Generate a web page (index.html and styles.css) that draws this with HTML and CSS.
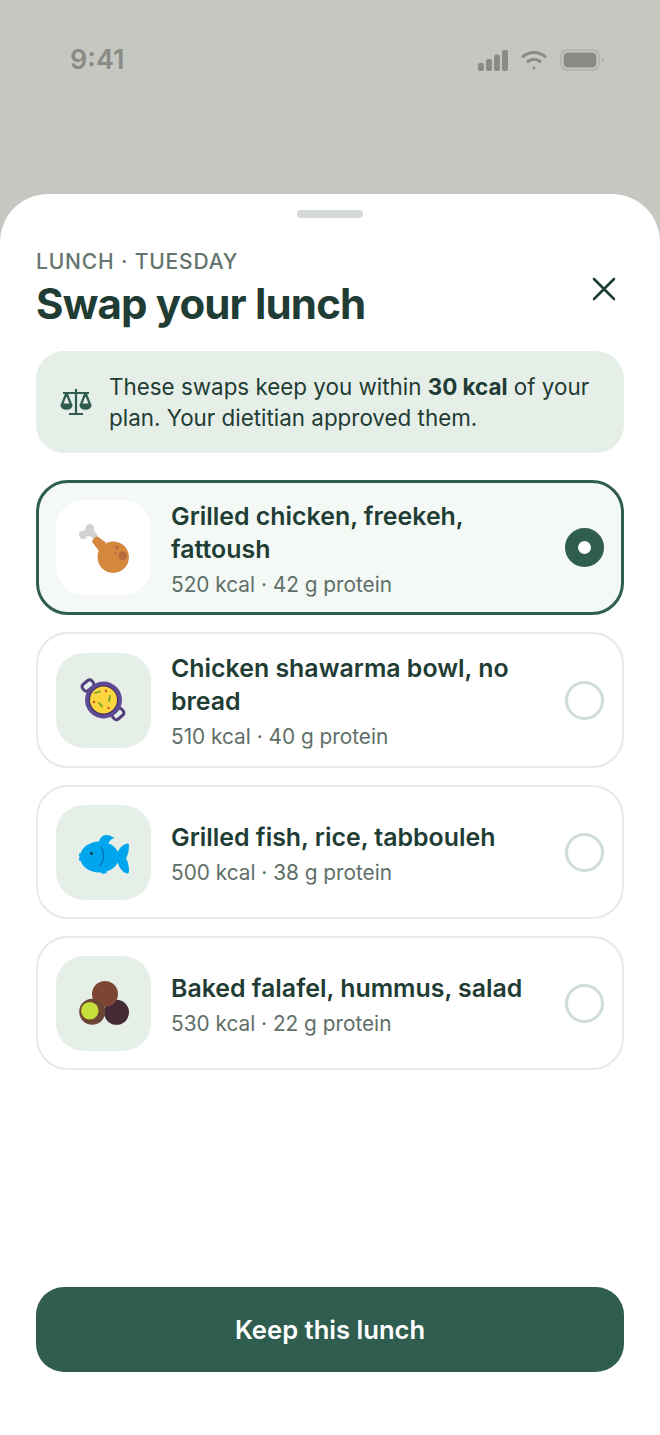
FILE: index.html
```html
<!DOCTYPE html>
<html lang="en">
<head>
  <meta charset="UTF-8">
  <meta name="viewport" content="width=device-width, initial-scale=1.0">
  <title>Swap your lunch</title>
  <link rel="stylesheet" href="styles.css">
</head>
<body>
  <div class="status">
    <span class="time">9:41</span>
    <div class="status-icons">
      <svg width="30" height="21" viewBox="0 0 30 21" fill="#8a8b86">
        <rect x="0" y="13" width="6" height="8" rx="2"/>
        <rect x="8" y="9" width="6" height="12" rx="2"/>
        <rect x="16" y="4.500" width="6" height="16.500" rx="2"/>
        <rect x="24" y="0" width="6" height="21" rx="2"/>
      </svg>
      <svg width="26" height="21" viewBox="0 0 26 21" fill="none" stroke="#8a8b86" stroke-width="3" stroke-linecap="round">
        <path d="M2 6.500C8 1 18 1 24 6.500"/>
        <path d="M7 11.500C10.500 8.500 15.500 8.500 19 11.500"/>
        <circle cx="13" cy="18" r="1.500" fill="#8a8b86" stroke="none"/>
      </svg>
      <svg width="44" height="22" viewBox="0 0 44 22" fill="none">
        <rect x="1" y="1" width="38" height="20" rx="6.500" stroke="#aeafaa" stroke-width="1.500"/>
        <rect x="3.500" y="3.500" width="33" height="15" rx="4.500" fill="#8a8b86"/>
        <path d="M42 9v4c1-.5 1.500-1 1.500-2s-.5-1.500-1.500-2z" fill="#aeafaa"/>
      </svg>
    </div>
  </div>

  <div class="sheet">
    <div class="handle"></div>

    <div class="head">
      <div>
        <div class="eyebrow">LUNCH · TUESDAY</div>
        <h1>Swap your lunch</h1>
      </div>
      <svg class="close" width="24" height="24" viewBox="0 0 24 24" fill="none" stroke="#1f3d34" stroke-width="2.600" stroke-linecap="round">
        <path d="M2 2l20 20M22 2L2 22"/>
      </svg>
    </div>

    <div class="notice">
      <svg class="scale" width="32" height="28" viewBox="0 0 32 28" fill="none" stroke="#2f5d50" stroke-width="2.200" stroke-linejoin="round">
        <path d="M16 1v24M9 26h14M3 5h26"/>
        <path d="M6.500 5L2 16.500h9zM25.500 5L21 16.500h9z"/>
        <path d="M1.500 17c.5 5 9.500 5 10 0zM20.500 17c.5 5 9.500 5 10 0z" fill="#2f5d50"/>
      </svg>
      <p>These swaps keep you within <b>30 kcal</b> of your plan. Your dietitian approved them.</p>
    </div>

    <div class="options">
      <div class="option selected">
        <div class="thumb">
          <svg width="50" height="50" viewBox="0 0 50 50">
            <path d="M5 12l6-6 6 9" stroke="#d1d1d1" stroke-width="5.500" fill="#d1d1d1"/>
            <circle cx="10.800" cy="5.200" r="4.200" fill="#d1d1d1"/>
            <circle cx="4.200" cy="11.800" r="4.200" fill="#d1d1d1"/>
            <path d="M13.500 19.500c-.5-1.500 0-2.500 1-3.500l1.500-1.500c1.500-1 3-1 4 0l7 5L20 28z" fill="#d3883e"/>
            <circle cx="34.200" cy="34.200" r="15.700" fill="#d3883e"/>
            <circle cx="38" cy="24.500" r="2" fill="#b76a3c"/>
            <circle cx="43.500" cy="32.800" r="4.300" fill="#b76a3c"/>
            <circle cx="36.500" cy="30" r="1.200" fill="#b76a3c"/>
          </svg>
        </div>
        <div class="info">
          <div class="name">Grilled chicken, freekeh, fattoush</div>
          <div class="meta">520 kcal · 42 g protein</div>
        </div>
        <div class="radio"></div>
      </div>

      <div class="option">
        <div class="thumb">
          <svg width="50" height="50" viewBox="0 0 50 50">
            <g fill="none" stroke="#533f7d" stroke-width="3">
              <rect x="3" y="6.500" width="12" height="8" rx="3" transform="rotate(-40 9 10.500)"/>
              <rect x="33" y="35" width="12" height="8" rx="3" transform="rotate(-40 39 39)"/>
            </g>
            <circle cx="24.500" cy="25" r="18.500" fill="#5f4b94"/>
            <circle cx="24.500" cy="25" r="14.500" fill="#3f2f5c"/>
            <circle cx="24.500" cy="25" r="13.500" fill="#fcd53f"/>
            <g stroke="#6fa32c" stroke-width="1.800" stroke-linecap="round">
              <path d="M16 18l5-1.500M31 21l-1 5M20 28l3 3.500"/>
            </g>
            <g fill="#e2492b">
              <circle cx="27" cy="16" r="1.200"/><circle cx="15" cy="27" r="1.200"/><circle cx="29.500" cy="33" r="1.200"/>
            </g>
          </svg>
        </div>
        <div class="info">
          <div class="name">Chicken shawarma bowl, no bread</div>
          <div class="meta">510 kcal · 40 g protein</div>
        </div>
        <div class="radio"></div>
      </div>

      <div class="option">
        <div class="thumb">
          <svg width="50" height="50" viewBox="0 0 50 50">
            <g fill="#00a6ed">
              <path d="M20 16c0-4 3-8 7-8 3 0 6 1 8.500 3-4 1-6 4-7 8z"/>
              <path d="M19 42l4 4.500c2 .5 4 0 5-1l-2-4z"/>
              <path d="M38 30c0-6 4-12 10-13.500 2-.5 2 1 2 2 0 5-1 9-3 13 2 3 3 8 3 12 0 2-.5 3.500-2 3-6-1.500-10-9-10-16.500z"/>
              <ellipse cx="20.500" cy="30" rx="19.500" ry="15.500"/>
              <circle cx="1.500" cy="28" r="1.800"/>
              <circle cx="1.500" cy="32" r="1.800"/>
            </g>
            <path d="M22 20c4 6 3 14-1 19" fill="none" stroke="#0074ba" stroke-width="1.400" stroke-linecap="round"/>
            <circle cx="12.500" cy="26.500" r="1.300" fill="#1c1c1c"/>
          </svg>
        </div>
        <div class="info">
          <div class="name">Grilled fish, rice, tabbouleh</div>
          <div class="meta">500 kcal · 38 g protein</div>
        </div>
        <div class="radio"></div>
      </div>

      <div class="option">
        <div class="thumb">
          <svg width="50" height="50" viewBox="0 0 50 50">
            <circle cx="37.500" cy="34.300" r="12.500" fill="#432a35"/>
            <circle cx="26" cy="16" r="13" fill="#7d4533"/>
            <circle cx="13.200" cy="33.700" r="13" fill="#6d4534"/>
            <circle cx="10.800" cy="32.700" r="8.800" fill="#c5e03a"/>
          </svg>
        </div>
        <div class="info">
          <div class="name">Baked falafel, hummus, salad</div>
          <div class="meta">530 kcal · 22 g protein</div>
        </div>
        <div class="radio"></div>
      </div>
    </div>

    <button class="keep">Keep this lunch</button>
  </div>
</body>
</html>
```

FILE: styles.css
```css
* {
  box-sizing: border-box;
}
body {
  margin: 0;
  height: 1435px;
  background: #c6c7c1;
  font-family: Inter, sans-serif;
  color: #1f3d34;
  display: flex;
  flex-direction: column;
  overflow: hidden;
}
.status {
  height: 194px;
  flex: none;
  padding: 43px 56px 0 70px;
  display: flex;
  justify-content: space-between;
  align-items: flex-start;
}
.time {
  font-size: 27px;
  line-height: 34px;
  font-weight: 600;
  color: #8a8b86;
}
.status-icons {
  display: flex;
  align-items: center;
  gap: 13px;
  padding-top: 6px;
}
.sheet {
  flex: 1;
  background: white;
  border-radius: 48px 48px 0 0;
  padding: 16px 36px 63px;
  display: flex;
  flex-direction: column;
}
.handle {
  width: 66px;
  height: 8px;
  border-radius: 4px;
  background: #d5dad7;
  align-self: center;
}
.head {
  display: flex;
  justify-content: space-between;
  align-items: flex-start;
  margin-top: 30px;
}
.eyebrow {
  font-size: 21px;
  line-height: 28px;
  font-weight: 500;
  letter-spacing: 0.84px;
  color: #64756d;
}
h1 {
  margin: 3px 0 0;
  font-size: 42px;
  line-height: 50px;
  font-weight: 700;
  letter-spacing: -0.84px;
}
.close {
  margin: 29px 8px 0 0;
}
.notice {
  margin-top: 22px;
  background: #e6eee8;
  border-radius: 28px;
  padding: 20px 24px;
  display: flex;
  align-items: center;
  gap: 17px;
}
.notice p {
  margin: 0;
  font-size: 22.4px;
  line-height: 31px;
}
.notice b {
  font-weight: 700;
}
.scale {
  flex: none;
}
.options {
  margin-top: 27px;
  display: flex;
  flex-direction: column;
  gap: 17px;
}
.option {
  min-height: 134px;
  border: 2px solid #e6eae8;
  border-radius: 32px;
  padding: 16px 18px;
  display: flex;
  align-items: center;
  gap: 20px;
}
.option.selected {
  border: 3px solid #2f5d50;
  background: #f4f9f6;
  padding: 14.5px 17px;
}
.thumb {
  width: 95px;
  height: 95px;
  flex: none;
  border-radius: 28px;
  background: #e6eee8;
  display: flex;
  align-items: center;
  justify-content: center;
}
.selected .thumb {
  background: white;
}
.info {
  flex: 1;
  padding-top: 2px;
}
.name {
  font-size: 24.9px;
  line-height: 33px;
  font-weight: 600;
}
.meta {
  margin-top: 6px;
  font-size: 20.8px;
  line-height: 26px;
  color: #5f6f68;
}
.radio {
  width: 39px;
  height: 39px;
  flex: none;
  border-radius: 50%;
  border: 3px solid #cfdcd8;
}
.selected .radio {
  border: 13px solid #2f5d50;
  background: white;
}
.keep {
  margin-top: auto;
  height: 85px;
  border: none;
  border-radius: 28px;
  background: #2f5d50;
  color: white;
  font-family: Inter, sans-serif;
  font-size: 25.6px;
  font-weight: 600;
}
```
